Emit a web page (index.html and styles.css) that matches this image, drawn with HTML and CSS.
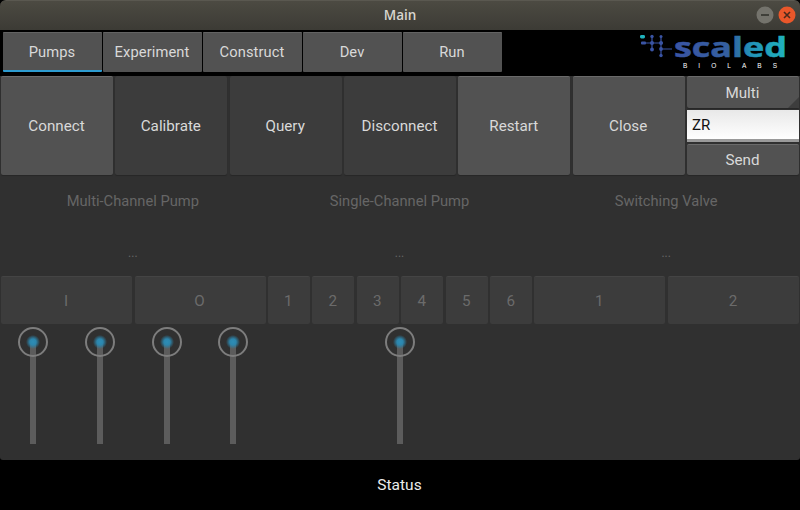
FILE: index.html

```html
<!DOCTYPE html>
<html lang="en">
<head>
    <meta charset="UTF-8">
    <title>Main</title>
    <link rel="stylesheet" href="styles.css">
</head>
<body>

<div class="window">
    <div class="titlebar">
        <span class="title">Main</span>
        <div class="winbuttons">
            <svg class="winbtn" viewBox="0 0 18 18">
                <circle cx="9" cy="9" r="8.5" fill="#74736c"/>
                <path d="M5 9h8" stroke="#33322e" stroke-width="1.6"/>
            </svg>
            <svg class="winbtn" viewBox="0 0 18 18">
                <circle cx="9" cy="9" r="8.5" fill="#e9572a"/>
                <path d="M6 6l6 6M12 6l-6 6" stroke="#4a2a1c" stroke-width="1.6"/>
            </svg>
        </div>
    </div>

    <div class="header">
        <div class="tabs">
            <div class="tab active">Pumps</div>
            <div class="tab">Experiment</div>
            <div class="tab">Construct</div>
            <div class="tab">Dev</div>
            <div class="tab">Run</div>
        </div>
        <svg class="logo" viewBox="0 -4 150 46">
            <defs>
                <linearGradient id="logoGrad" gradientUnits="userSpaceOnUse" x1="37" x2="150" y1="0" y2="0">
                    <stop offset="0" stop-color="#3a54a4"/>
                    <stop offset="0.5" stop-color="#34609f"/>
                    <stop offset="0.68" stop-color="#2292b8"/>
                    <stop offset="1" stop-color="#1fb3bd"/>
                </linearGradient>
            </defs>
            <rect x="3" y="1" width="5" height="3.4" rx="1.4" fill="#1fb3bd"/>
            <g fill="#3a54a4">
                <rect x="4" y="7.5" width="5" height="3" rx="1"/>
                <circle cx="15" cy="2.5" r="1.7"/>
                <circle cx="15" cy="9" r="2"/>
                <circle cx="15" cy="15.5" r="1.9"/>
                <circle cx="24" cy="2.5" r="1.5"/>
                <circle cx="24" cy="9" r="2"/>
                <circle cx="24" cy="15" r="1.9"/>
                <circle cx="24" cy="21.5" r="1.7"/>
            </g>
            <path d="M4 9h22M15 2v14M24 3v19M24 15h11" stroke="#3a54a4" stroke-width="1.2" fill="none"/>
            <text class="logo-word" x="37" y="23" textLength="113" lengthAdjust="spacingAndGlyphs" fill="url(#logoGrad)" stroke="url(#logoGrad)">scaled</text>
            <text class="logo-sub" x="46" y="34" textLength="94">BIOLABS</text>
        </svg>
    </div>

    <div class="panel">
        <div class="actions">
            <div class="btn lit">Connect</div>
            <div class="btn">Calibrate</div>
            <div class="btn">Query</div>
            <div class="btn">Disconnect</div>
            <div class="btn lit">Restart</div>
            <div class="btn lit">Close</div>
            <div class="side">
                <div class="btn lit combo">Multi</div>
                <div class="field">ZR</div>
                <div class="btn lit">Send</div>
            </div>
        </div>

        <div class="sections">
            <div class="section">
                <div class="label">Multi-Channel Pump</div>
                <div class="dots">...</div>
                <div class="keys two">
                    <div class="key">I</div>
                    <div class="key">O</div>
                </div>
                <div class="sliders">
                    <div class="slider"><div class="knob"></div></div>
                    <div class="slider"><div class="knob"></div></div>
                    <div class="slider"><div class="knob"></div></div>
                    <div class="slider"><div class="knob"></div></div>
                </div>
            </div>
            <div class="section">
                <div class="label">Single-Channel Pump</div>
                <div class="dots">...</div>
                <div class="keys six">
                    <div class="key">1</div>
                    <div class="key">2</div>
                    <div class="key">3</div>
                    <div class="key">4</div>
                    <div class="key">5</div>
                    <div class="key">6</div>
                </div>
                <div class="sliders">
                    <div class="slider"><div class="knob"></div></div>
                </div>
            </div>
            <div class="section">
                <div class="label">Switching Valve</div>
                <div class="dots">...</div>
                <div class="keys two">
                    <div class="key">1</div>
                    <div class="key">2</div>
                </div>
            </div>
        </div>
    </div>

    <div class="status">Status</div>
</div>

</body>
</html>
```

FILE: styles.css

```css
html, body {
    margin: 0;
    height: 100%;
    background-color: #000;
}
.window {
    display: flex;
    flex-direction: column;
    height: 510px;
    font-family: Roboto, sans-serif;
    font-size: 15.2px;
    color: #d9d9d9;
}
.titlebar {
    position: relative;
    flex: 0 0 30px;
    display: flex;
    align-items: center;
    justify-content: center;
    box-sizing: border-box;
    padding-bottom: 2px;
    border-top: 1px solid #5a5850;
    border-radius: 6px 6px 0 0;
    background: linear-gradient(#4c4a42, #3c3b35);
}
.title {
    font-family: "Open Sans", Ubuntu, sans-serif;
    font-size: 13.5px;
    font-weight: 600;
    color: #d8d6cf;
}
.winbuttons {
    position: absolute;
    right: 4px;
    top: 5px;
    display: flex;
    gap: 4px;
}
.winbtn {
    width: 18px;
    height: 18px;
}
.header {
    flex: 0 0 46px;
    display: flex;
    justify-content: space-between;
    box-sizing: border-box;
    padding: 2px 13px 0 3px;
}
.tabs {
    display: flex;
    gap: 1px;
    height: 40px;
    font-size: 14.7px;
    letter-spacing: 0.1px;
}
.tab {
    display: flex;
    align-items: center;
    justify-content: center;
    box-sizing: border-box;
    width: 99px;
    padding: 0 1px 1px 0;
    background-color: #525252;
    border-top: 1px solid #636363;
    border-radius: 1px;
}
.tab.active {
    border-bottom: 2px solid #2d9bd0;
    padding-bottom: 0;
}
.logo {
    width: 150px;
    height: 46px;
    margin-top: -2px;
    overflow: visible;
}
.logo-word {
    font-family: "Open Sans", sans-serif;
    font-size: 26.5px;
    font-weight: 700;
    stroke-width: 0.5px;
}
.logo-sub {
    font-family: "Liberation Sans", sans-serif;
    font-size: 6.5px;
    fill: #fff;
}
.panel {
    flex: 1;
    display: flex;
    flex-direction: column;
    background-color: #303030;
    border-radius: 0 0 3px 3px;
}
.actions {
    display: grid;
    grid-template-columns: repeat(7, 1fr);
    gap: 2.3px;
    height: 99px;
    padding: 0 1px;
}
.btn {
    display: flex;
    align-items: center;
    justify-content: center;
    box-sizing: border-box;
    padding: 1px 1px 0 0;
    background-color: #3c3c3c;
    border-radius: 2px;
    box-shadow: 0 1px 1px rgba(0, 0, 0, 0.2);
}
.btn.lit {
    padding-top: 0;
    background-color: #525252;
    border-top: 1px solid #6a6a6a;
}
.side {
    display: flex;
    flex-direction: column;
    gap: 2px;
}
.side .btn {
    flex: 1;
    padding-top: 1px;
}
.combo {
    position: relative;
}
.combo::after {
    content: "";
    position: absolute;
    right: 0;
    bottom: 0;
    border-style: solid;
    border-width: 0 0 11px 11px;
    border-color: transparent transparent #3d3d3d transparent;
}
.field {
    flex: 0 0 32px;
    display: flex;
    align-items: center;
    box-sizing: border-box;
    padding: 2px 0 0 5px;
    border-bottom: 3px solid #9a9a9a;
    background: linear-gradient(#e8e8e8, #ffffff);
    color: #111;
    font-size: 15px;
}
.sections {
    flex: 1;
    display: grid;
    grid-template-columns: repeat(3, 1fr);
}
.section {
    display: flex;
    flex-direction: column;
    padding: 0 1px;
}
.label {
    margin-top: 17px;
    height: 18px;
    line-height: 18px;
    text-align: center;
    font-size: 14.7px;
    color: #666;
    padding-right: 1px;
}
.dots {
    margin-top: 35px;
    height: 16px;
    line-height: 16px;
    text-align: center;
    font-size: 12px;
    color: #666;
    padding-right: 1px;
}
.keys {
    display: grid;
    gap: 2.4px;
    height: 48px;
    margin-top: 15px;
}
.keys.two {
    grid-template-columns: repeat(2, 1fr);
}
.keys.six {
    grid-template-columns: repeat(6, 1fr);
}
.key {
    display: flex;
    align-items: center;
    justify-content: center;
    padding-right: 1px;
    background-color: #3c3c3c;
    border-top: 1px solid #444;
    border-radius: 2px;
    box-sizing: border-box;
    color: #6b6b6b;
}
.sliders {
    display: flex;
    justify-content: center;
    margin: 3px -1px 0;
}
.slider {
    position: relative;
    flex: 0 0 66.67px;
    display: flex;
    justify-content: center;
    height: 117px;
}
.slider::before {
    content: "";
    position: absolute;
    top: 15px;
    bottom: 0;
    width: 6px;
    background-color: #5c5c5c;
}
.knob {
    position: relative;
    box-sizing: border-box;
    width: 30px;
    height: 30px;
    border: 2px solid #7d7d7d;
    border-radius: 50%;
    background: radial-gradient(circle, #2e8db6 0, #2c86ad 3px, rgba(48, 130, 165, 0) 7px);
}
.status {
    flex: 0 0 50px;
    display: flex;
    align-items: center;
    justify-content: center;
    padding: 0 1px 1px 0;
    box-sizing: border-box;
    font-size: 15.5px;
    color: #ececec;
}
```
